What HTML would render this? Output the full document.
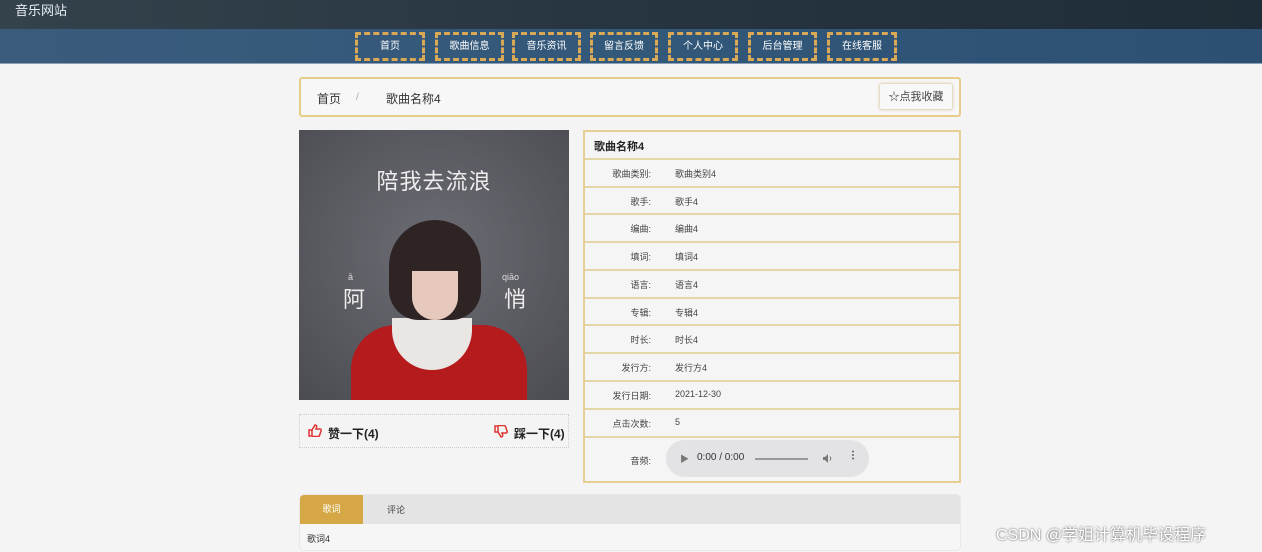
<!DOCTYPE html>
<html><head><meta charset="utf-8"><style>
*{margin:0;padding:0;box-sizing:border-box}
body{width:1262px;height:552px;overflow:hidden;background:#f4f4f4;font-family:"Liberation Sans","Noto Sans CJK SC",sans-serif;position:relative;color:#333}
.abs{position:absolute}
.top{left:0;top:0;width:1262px;height:29px;background:linear-gradient(90deg,#34424c,#263540 50%,#1f2d38);}
.top span{position:absolute;left:15px;top:0;color:#e8eef2;font-size:13px}
.nav{left:0;top:29px;width:1262px;height:35px;background:linear-gradient(90deg,#3b5b7c,#32587a 50%,#2d4f72);border-bottom:1px solid #8aa0b8}
.ni{position:absolute;top:3px;height:29px;border:3px dashed #d9a955;color:#fff;font-size:10px;text-align:center;line-height:23px}
.bc{left:299px;top:77px;width:662px;height:40px;border:2px solid #e8cd8a;border-radius:3px;background:#f7f7f7;font-size:12px}
.fav{left:879px;top:83px;width:74px;height:27px;border:1px solid #e6dcc8;border-radius:3px;background:#f8f8f8;box-shadow:0 0 3px #e2d6c0;font-size:11px;color:#444;text-align:center;line-height:26px}
.img{left:299px;top:130px;width:270px;height:270px;background:radial-gradient(circle at 50% 45%,#6c6c74,#55555c 70%,#4b4b52);overflow:hidden}
.like{left:299px;top:414px;width:270px;height:34px;border:1px dotted #ccc;font-size:12px;font-weight:bold;color:#222}
.tbl{left:583px;top:130px;width:378px;height:353px;border:2px solid #e6cf92;background:#f5f5f5}
.row{position:absolute;left:0;width:374px;border-top:2px solid #e6d7a8;font-size:9px;color:#444}
.row .k{position:absolute;right:308px;width:80px;text-align:right}
.row .v{position:absolute;left:90px}
.tabs{left:299px;top:494px;width:662px;height:57px;border:1px solid #e8e8e8;border-radius:5px;background:#f6f6f6;overflow:hidden}
</style></head><body>
<div class="abs top"><span>音乐网站</span></div>
<div class="abs nav">
<div class="ni" style="left:355px;width:70px">首页</div>
<div class="ni" style="left:435px;width:69px">歌曲信息</div>
<div class="ni" style="left:512px;width:69px">音乐资讯</div>
<div class="ni" style="left:590px;width:68px">留言反馈</div>
<div class="ni" style="left:668px;width:70px">个人中心</div>
<div class="ni" style="left:748px;width:69px">后台管理</div>
<div class="ni" style="left:827px;width:70px">在线客服</div>
</div>
<div class="abs bc"><span class="abs" style="left:16px;top:11px">首页</span><span class="abs" style="left:55px;top:13px;color:#aaa;font-size:10px">/</span><span class="abs" style="left:85px;top:11px">歌曲名称4</span></div>
<div class="abs fav">☆点我收藏</div>
<div class="abs img">
<div class="abs" style="left:0;top:34px;width:270px;text-align:center;color:#eee;font-size:22px;letter-spacing:1px">陪我去流浪</div>
<div class="abs" style="left:49px;top:142px;color:#ddd;font-size:9px">ā</div>
<div class="abs" style="left:44px;top:152px;color:#eee;font-size:22px">阿</div>
<div class="abs" style="left:203px;top:142px;color:#ddd;font-size:9px">qiāo</div>
<div class="abs" style="left:205px;top:152px;color:#eee;font-size:22px">悄</div>
<div class="abs" style="left:52px;top:195px;width:176px;height:90px;background:#b51a1c;border-radius:45px 45px 0 0"></div>
<div class="abs" style="left:93px;top:188px;width:80px;height:52px;background:#e9e6e4;border-radius:0 0 40px 40px"></div>
<div class="abs" style="left:90px;top:90px;width:92px;height:100px;background:#2e2424;border-radius:46px 46px 30px 30px"></div>
<div class="abs" style="left:113px;top:130px;width:46px;height:60px;background:#e6c8bc;border-radius:8px 8px 23px 23px"></div>
<div class="abs" style="left:105px;top:105px;width:62px;height:36px;background:#2e2424;border-radius:30px 30px 4px 4px"></div>
</div>
<div class="abs like">
<svg class="abs" style="left:8px;top:9px" width="14" height="13" viewBox="0 0 14 13"><path d="M1 6h3v6H1z M4 6l3-5c1.5 0 2 1 1.5 2.5L8 5h4c1 0 1.5 1 1 2l-1.5 4.5c-.3.7-.8 1-1.5 1H4" fill="none" stroke="#d33" stroke-width="1.5"/></svg>
<span class="abs" style="left:28px;top:10px">赞一下(4)</span>
<svg class="abs" style="left:194px;top:10px" width="14" height="13" viewBox="0 0 14 13"><path d="M1 1h3v6H1z M4 7l3 5c1.5 0 2-1 1.5-2.5L8 8h4c1 0 1.5-1 1-2L11.5 1.5C11.2.8 10.7.5 10 .5H4" fill="none" stroke="#d33" stroke-width="1.5"/></svg>
<span class="abs" style="left:214px;top:10px">踩一下(4)</span>
</div>
<div class="abs tbl">
<div class="abs" style="left:9px;top:6px;font-size:11px;font-weight:bold;color:#222">歌曲名称4</div>
<div class="row" style="top:26px;height:28px"><span class="k" style="top:7px">歌曲类别:</span><span class="v" style="top:7px">歌曲类别4</span></div>
<div class="row" style="top:54px"><span class="k" style="top:7px">歌手:</span><span class="v" style="top:7px">歌手4</span></div>
<div class="row" style="top:81px"><span class="k" style="top:7px">编曲:</span><span class="v" style="top:7px">编曲4</span></div>
<div class="row" style="top:109px"><span class="k" style="top:7px">填词:</span><span class="v" style="top:7px">填词4</span></div>
<div class="row" style="top:137px"><span class="k" style="top:7px">语言:</span><span class="v" style="top:7px">语言4</span></div>
<div class="row" style="top:165px"><span class="k" style="top:7px">专辑:</span><span class="v" style="top:7px">专辑4</span></div>
<div class="row" style="top:192px"><span class="k" style="top:7px">时长:</span><span class="v" style="top:7px">时长4</span></div>
<div class="row" style="top:220px"><span class="k" style="top:7px">发行方:</span><span class="v" style="top:7px">发行方4</span></div>
<div class="row" style="top:248px"><span class="k" style="top:7px">发行日期:</span><span class="v" style="top:7px">2021-12-30</span></div>
<div class="row" style="top:276px"><span class="k" style="top:7px">点击次数:</span><span class="v" style="top:7px">5</span></div>
<div class="row" style="top:304px;height:47px"><span class="k" style="top:16px">音频:</span>
<div class="abs" style="left:81px;top:2px;width:203px;height:37px;border-radius:19px;background:#e3e3e5;font-size:10px;color:#333">
<span class="abs" style="left:14px;top:12px;color:#777;font-size:9px">▶</span><span class="abs" style="left:31px;top:12px">0:00 / 0:00</span>
<div class="abs" style="left:89px;top:18px;width:53px;height:2px;background:#999"></div>
<svg class="abs" style="left:156px;top:13px" width="11" height="11" viewBox="0 0 11 11"><path d="M1 4h2l3-3v9L3 7H1z" fill="#777"/><path d="M8 3.5q1.5 2 0 4" stroke="#777" fill="none"/></svg>
<span class="abs" style="left:182px;top:10px;font-weight:bold">⋮</span></div></div>
</div>
<div class="abs tabs">
<div class="abs" style="left:0;top:0;width:662px;height:29px;background:#e4e4e4"></div>
<div class="abs" style="left:0;top:0;width:63px;height:29px;background:#d5a845;color:#fff;font-size:9px;text-align:center;line-height:29px">歌词</div>
<div class="abs" style="left:87px;top:8px;font-size:9px;color:#444">评论</div>
<div class="abs" style="left:7px;top:37px;font-size:9px;color:#333">歌词4</div>
</div>
<div class="abs" style="left:996px;top:521px;font-size:16px;color:#fff;text-shadow:0 0 2px #444">CSDN @学姐计算机毕设程序</div>
</body></html>
